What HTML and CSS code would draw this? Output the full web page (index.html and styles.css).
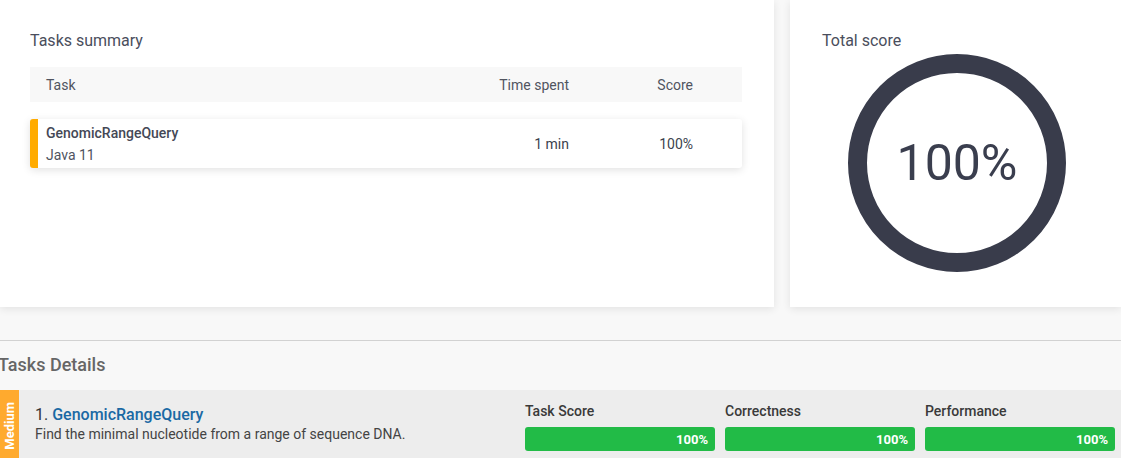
FILE: index.html
```html
<!DOCTYPE html>
<html>
<head>
<meta charset="utf-8">
<link rel="stylesheet" href="styles.css">
</head>
<body>
<div class="top">
  <section class="card summary">
    <h2 class="card-title">Tasks summary</h2>
    <div class="table-head">
      <span class="col-task">Task</span>
      <span class="col-time">Time spent</span>
      <span class="col-score">Score</span>
    </div>
    <div class="table-row">
      <div class="col-task row-task">
        <div class="task-name">GenomicRangeQuery</div>
        <div class="task-lang">Java 11</div>
      </div>
      <span class="col-time">1 min</span>
      <span class="col-score">100%</span>
    </div>
  </section>
  <section class="card total">
    <h2 class="card-title">Total score</h2>
    <div class="ring">
      <svg width="218" height="218" viewBox="0 0 218 218">
        <circle cx="109" cy="109" r="99.5" fill="none" stroke="#393c4b" stroke-width="19"/>
      </svg>
      <span class="ring-value">100%</span>
    </div>
  </section>
</div>
<div class="divider"></div>
<h2 class="details-title">Tasks Details</h2>
<div class="task">
  <div class="difficulty"><span>Medium</span></div>
  <div class="task-info">
    <div class="task-heading">1. <a class="task-link">GenomicRangeQuery</a></div>
    <div class="task-desc">Find the minimal nucleotide from a range of sequence DNA.</div>
  </div>
  <div class="metrics">
    <div class="metric">
      <div class="metric-label">Task Score</div>
      <div class="bar" style="width:100%"><span>100%</span></div>
    </div>
    <div class="metric">
      <div class="metric-label">Correctness</div>
      <div class="bar" style="width:100%"><span>100%</span></div>
    </div>
    <div class="metric">
      <div class="metric-label">Performance</div>
      <div class="bar" style="width:100%"><span>100%</span></div>
    </div>
  </div>
</div>
</body>
</html>
```

FILE: styles.css
```css
* { box-sizing: border-box; }
html, body { margin: 0; padding: 0; }
body {
  background: #f8f8f8;
  font-family: Roboto, "Liberation Sans", sans-serif;
  color: #3b3f4d;
  overflow: hidden;
  width: 1121px;
}
.top {
  display: flex;
  gap: 16px;
  height: 307px;
}
.card {
  background: #fff;
  box-shadow: 0 2px 8px rgba(0,0,0,0.09);
}
.summary {
  width: 774px;
  flex: none;
  padding: 31px 32px 0 30px;
}
.total {
  flex: 1;
  padding: 31px 0 0 32px;
}
.card-title {
  margin: 0;
  font-size: 16px;
  line-height: 20px;
  font-weight: 400;
  color: #4a4e5c;
}
.table-head, .table-row {
  display: grid;
  grid-template-columns: 1fr 110px 124px;
  padding-right: 49px;
  align-items: center;
  font-size: 14px;
}
.table-head {
  margin-top: 16px;
  height: 35px;
  background: #f8f8f8;
  color: #50545f;
}
.col-task { padding-left: 16px; }
.col-time, .col-score { text-align: right; }
.table-row {
  margin-top: 17px;
  height: 49px;
  background: #fff;
  border-radius: 3px;
  border-left: 8px solid #ffab00;
  box-shadow: 0 2px 8px rgba(0,0,0,0.12);
  color: #3b3f4d;
}
.row-task { padding-left: 8px; line-height: 22px; }
.task-name { font-weight: 500; color: #444856; }
.task-lang { color: #50545f; }
.ring {
  position: relative;
  width: 218px;
  height: 218px;
  margin: 3px 0 0 26px;
}
.ring svg { display: block; }
.ring-value {
  position: absolute;
  inset: 0;
  display: flex;
  align-items: center;
  justify-content: center;
  font-size: 50px;
  font-weight: 400;
  color: #3a3e4e;
}
.divider {
  margin-top: 33px;
  border-top: 1px solid #d2d2d2;
}
.details-title {
  margin: 12px 0 13px -2px;
  font-size: 18px;
  line-height: 24px;
  font-weight: 500;
  color: #666;
}
.task {
  display: flex;
  height: 72px;
  background: #ededed;
}
.difficulty {
  width: 19px;
  flex: none;
  background: #ffaa2e;
  display: flex;
  align-items: center;
  justify-content: center;
}
.difficulty span {
  writing-mode: vertical-rl;
  transform: rotate(180deg);
  color: #fff;
  font-size: 13px;
  font-weight: 700;
  margin-left: -1px;
}
.task-info {
  flex: 1;
  padding: 15px 0 0 16px;
}
.task-heading {
  font-size: 16px;
  line-height: 20px;
  color: #333;
}
.task-link {
  color: #1a69a4;
  font-weight: 500;
}
.task-desc {
  font-size: 14px;
  line-height: 18px;
  color: #444;
}
.metrics {
  display: flex;
  gap: 10px;
  padding: 11px 6px 0 0;
}
.metric { width: 190px; }
.metric-label {
  font-size: 14px;
  line-height: 20px;
  font-weight: 500;
  color: #3a3a3a;
  margin-bottom: 6px;
}
.bar {
  height: 24px;
  background: #22bb47;
  border-radius: 3px;
  display: flex;
  align-items: center;
  justify-content: flex-end;
  padding-right: 7px;
  color: #fff;
  font-size: 13px;
  font-weight: 700;
}
```
